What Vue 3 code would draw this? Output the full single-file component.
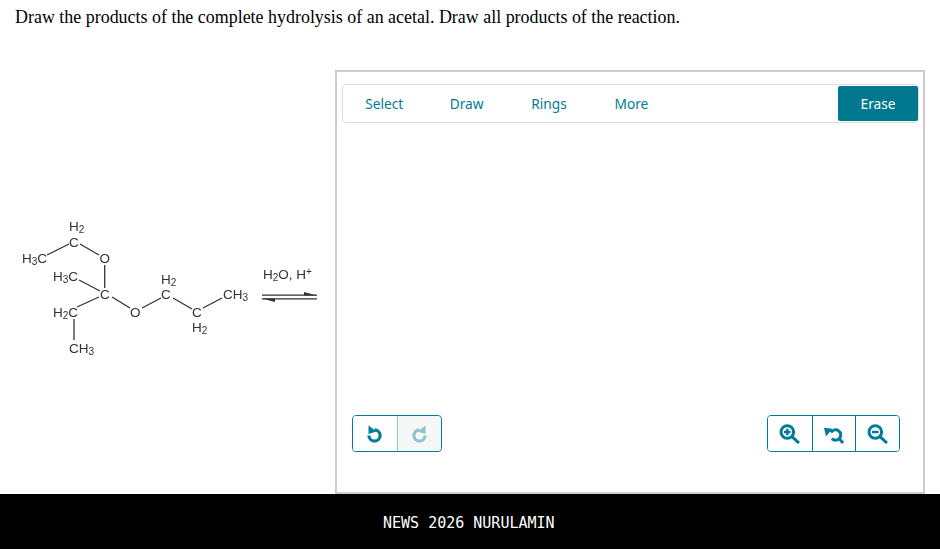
<template>
  <div class="page">
    <p class="question">Draw the products of the complete hydrolysis of an acetal. Draw all products of the reaction.</p>

    <div class="work">
      <div class="reaction">
        <!-- viewBox is in page pixels so labels line up with the scan -->
        <svg class="mol" width="335" height="160" viewBox="0 205 335 160">
          <g class="bonds">
            <line x1="47" y1="255" x2="69" y2="244" />
            <line x1="80" y1="244" x2="99" y2="255" />
            <line x1="104.7" y1="265" x2="104.7" y2="288" />
            <line x1="79" y1="280" x2="100" y2="291" />
            <line x1="77" y1="307" x2="99" y2="297" />
            <line x1="74" y1="319" x2="74" y2="340" />
            <line x1="112" y1="297" x2="130" y2="308" />
            <line x1="142" y1="308" x2="161" y2="298" />
            <line x1="173" y1="298" x2="192" y2="309" />
            <line x1="203" y1="308" x2="222" y2="298" />
            <line x1="262" y1="295.2" x2="317" y2="295.2" />
            <line x1="262" y1="298.8" x2="317" y2="298.8" />
          </g>
          <polygon class="head" points="317,295.5 304,295.5 304,292" />
          <polygon class="head" points="262,298.5 275,298.5 275,302" />
          <g class="labels">
            <text x="69" y="231">H<tspan class="sub" dy="2">2</tspan></text>
            <text x="69" y="247">C</text>
            <text x="22" y="263">H<tspan class="sub" dy="2">3</tspan><tspan dy="-2">C</tspan></text>
            <text x="99.5" y="263">O</text>
            <text x="53" y="281">H<tspan class="sub" dy="2">3</tspan><tspan dy="-2">C</tspan></text>
            <text x="100" y="299">C</text>
            <text x="53" y="317">H<tspan class="sub" dy="2">2</tspan><tspan dy="-2">C</tspan></text>
            <text x="69" y="353">CH<tspan class="sub" dy="2">3</tspan></text>
            <text x="130" y="317">O</text>
            <text x="161" y="284">H<tspan class="sub" dy="2">2</tspan></text>
            <text x="161" y="299">C</text>
            <text x="192" y="317">C</text>
            <text x="192" y="332">H<tspan class="sub" dy="2">2</tspan></text>
            <text x="223" y="299">CH<tspan class="sub" dy="2">3</tspan></text>
            <text x="263" y="279">H<tspan class="sub" dy="2">2</tspan><tspan dy="-2">O, H</tspan><tspan class="sub" dy="-4">+</tspan></text>
          </g>
        </svg>
      </div>

      <div class="panel">
        <div class="toolbar">
          <div class="tabs">
            <span v-for="t in tabs" :key="t" class="tab">{{ t }}</span>
          </div>
          <button class="erase">Erase</button>
        </div>

        <div class="canvas"></div>

        <div class="controls">
          <div class="group">
            <button class="cell">
              <svg width="17" height="18" viewBox="0 0 17 18">
                <path class="ring" d="M8.5 4.9 A5.6 5.6 0 1 1 2.9 10.5" />
                <polygon class="fill" points="2.5,0.5 2.5,9 10.5,6.5" />
              </svg>
            </button>
            <button class="cell off">
              <svg width="17" height="18" viewBox="0 0 17 18">
                <g transform="matrix(-1 0 0 1 17 0)">
                  <path class="ring" d="M8.5 4.9 A5.6 5.6 0 1 1 2.9 10.5" />
                  <polygon class="fill" points="2.5,0.5 2.5,9 10.5,6.5" />
                </g>
              </svg>
            </button>
          </div>
          <div class="group">
            <button class="cell">
              <svg width="21" height="21" viewBox="0 0 21 21">
                <circle class="ic" cx="8.3" cy="9" r="6.3" />
                <line class="ic" x1="13" y1="13.7" x2="20" y2="20" />
                <path class="thin" d="M5 9 H11.6 M8.3 5.7 V12.3" />
              </svg>
            </button>
            <button class="cell">
              <svg width="21" height="21" viewBox="0 0 21 21">
                <path class="ic" d="M8 9.4 A5.2 5.2 0 1 1 8.8 15.6" />
                <line class="ic" x1="16.4" y1="15.8" x2="20" y2="20" />
                <polygon class="fill" points="1,4.7 9.5,5.8 3,13.5" />
              </svg>
            </button>
            <button class="cell">
              <svg width="21" height="21" viewBox="0 0 21 21">
                <circle class="ic" cx="8.3" cy="9" r="6.3" />
                <line class="ic" x1="13" y1="13.7" x2="20" y2="20" />
                <path class="thin" d="M5 9 H11.6" />
              </svg>
            </button>
          </div>
        </div>
      </div>
    </div>

    <div class="footer">NEWS 2026 NURULAMIN</div>
  </div>
</template>

<script setup>
const tabs = ['Select', 'Draw', 'Rings', 'More']
</script>

<style scoped>
.page { width: 940px; height: 549px; display: flex; flex-direction: column; background: #fff; overflow: hidden; }
.question {
  margin: 0; padding: 7px 0 0 15px; height: 70px; box-sizing: border-box;
  font: 17.95px/20px "Liberation Serif", serif; color: #000;
}
.work { flex: 1; display: flex; min-height: 0; }
.reaction { width: 335px; padding-top: 135px; box-sizing: border-box; }
.mol { display: block; filter: blur(.35px); }
.bonds line { stroke: #333; stroke-width: 1.3; }
.head { fill: #333; }
.labels text { font: 13.5px "Liberation Sans", sans-serif; fill: #333; }
.labels .sub { font-size: 10px; }

.panel {
  width: 590px; box-sizing: border-box; border: 2px solid #ccc;
  display: flex; flex-direction: column; padding: 12px 4px 40px 5px;
}
.toolbar {
  height: 39px; box-sizing: border-box; border: 1px solid #ddd; border-radius: 4px;
  display: flex; align-items: center; justify-content: space-between;
}
.tabs { display: flex; }
.tab {
  width: 82.4px; text-align: center; font: 13.7px "Noto Sans", sans-serif; color: #007c98;
}
.erase {
  width: 80px; height: 35px; border: 0; border-radius: 2px; background: #00788f; color: #fff;
  font: 13.7px "Noto Sans", sans-serif; padding: 0;
}
.canvas { flex: 1; }
.controls { display: flex; justify-content: space-between; padding: 0 19px 0 10px; }
.group { display: flex; border: 1px solid #007c98; border-radius: 4px; overflow: hidden; height: 37px; box-sizing: border-box; }
.cell {
  width: 43.75px; height: 35px; border: 0; padding: 0; background: #fff;
  display: flex; align-items: center; justify-content: center;
}
.cell + .cell { border-left: 1.5px solid #007c98; }
.cell.off { background: #eceeee; opacity: .45; }
.ic { fill: none; stroke: #007c98; stroke-width: 3; }
.ring { fill: none; stroke: #007c98; stroke-width: 3.2; }
.thin { fill: none; stroke: #007c98; stroke-width: 2.4; }
.fill { fill: #007c98; }

.footer {
  height: 55px; flex: none; background: #000; color: #fff;
  display: flex; align-items: center; padding: 3px 0 0 383px; box-sizing: border-box;
  font: 15px "DejaVu Sans Mono", monospace;
}
</style>
